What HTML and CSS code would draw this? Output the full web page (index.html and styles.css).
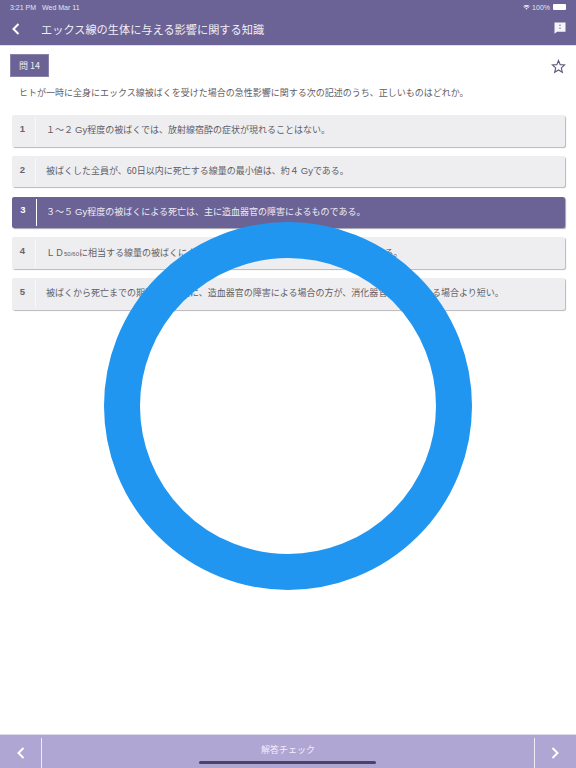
FILE: index.html
```html
<!DOCTYPE html>
<html lang="ja">
<head>
<meta charset="utf-8">
<title>問 14</title>
<link rel="stylesheet" href="styles.css">
</head>
<body>
<div class="app">
  <header class="header">
    <div class="status">
      <div class="status-left"><span>3:21 PM</span><span>Wed Mar 11</span></div>
      <div class="status-right">
        <svg class="wifi" viewBox="0 0 12 9"><path d="M6 8.6 3.900 6.400a3 3 0 0 1 4.200 0zM2.800 5.300 1.700 4.100a6 6 0 0 1 8.600 0L9.200 5.300a4.500 4.500 0 0 0-6.400 0zM.9 3.300 0 2.300a8.400 8.400 0 0 1 12 0l-.9 1a7.100 7.100 0 0 0-10.200 0z"/></svg>
        <span>100%</span>
        <span class="battery"></span>
      </div>
    </div>
    <div class="nav">
      <svg class="nav-back" viewBox="0 0 8 12"><path d="M6.500 1 1.500 6l5 5"/></svg>
      <h1 class="title">エックス線の生体に与える影響に関する知識</h1>
      <svg class="nav-note" viewBox="0 0 12 12"><path fill-rule="evenodd" d="M.5.5h11v9.200H3L.5 11.800zM5.500 2.500v1.600h1V2.500zM5.500 5.400V7h1V5.400z"/></svg>
    </div>
  </header>

  <main class="content">
    <div class="q-head">
      <span class="badge">問 14</span>
      <svg class="star" viewBox="0 0 16 16"><path d="M8 1.600 9.800 6l4.800.4-3.600 3.100 1.100 4.700L8 11.700l-4.100 2.500 1.100-4.700L1.400 6.400 6.200 6z"/></svg>
    </div>
    <p class="question">ヒトが一時に全身にエックス線被ばくを受けた場合の急性影響に関する次の記述のうち、正しいものはどれか。</p>
    <ol class="options">
      <li class="option"><span class="num">1</span><span class="text">１～２<span class="unit">Gy</span>程度の被ばくでは、放射線宿酔の症状が現れることはない。</span></li>
      <li class="option"><span class="num">2</span><span class="text">被ばくした全員が、60日以内に死亡する線量の最小値は、約４<span class="unit">Gy</span>である。</span></li>
      <li class="option selected"><span class="num">3</span><span class="text">３～５<span class="unit">Gy</span>程度の被ばくによる死亡は、主に造血器官の障害によるものである。</span></li>
      <li class="option"><span class="num">4</span><span class="text">ＬＤ<span class="sub">50/60</span>に相当する線量の被ばくによる死亡は、主に消化器官の障害によるものである。</span></li>
      <li class="option"><span class="num">5</span><span class="text">被ばくから死亡までの期間は、一般に、造血器官の障害による場合の方が、消化器官の障害による場合より短い。</span></li>
    </ol>
  </main>

  <footer class="footer">
    <div class="foot-btn foot-prev"><svg viewBox="0 0 8 12"><path d="M6.500 1 1.500 6l5 5"/></svg></div>
    <div class="foot-label">解答チェック</div>
    <div class="foot-btn foot-next"><svg viewBox="0 0 8 12"><path d="M1.500 1l5 5-5 5"/></svg></div>
    <span class="home-bar"></span>
  </footer>

  <svg class="spinner" viewBox="0 0 368 368"><circle cx="184" cy="184" r="166"/></svg>
</div>
</body>
</html>
```
FILE: styles.css
```css
* { box-sizing: border-box; margin: 0; padding: 0; }
html, body { width: 576px; height: 768px; overflow: hidden; background: #fff; }
body { font-family: "Noto Sans CJK JP", "Noto Sans", sans-serif; color: #55525f; }
.app { position: relative; width: 576px; height: 768px; display: flex; flex-direction: column; }

.header { height: 46px; background: #6b6295; border-bottom: 1px solid #e2e0ec; color: #fff; flex: none; }
.status { height: 14px; padding: 0 10px; display: flex; justify-content: space-between; align-items: center; font: 7px "Liberation Sans", sans-serif; color: #e8e6f0; }
.status-left { display: flex; gap: 6px; }
.status-right { display: flex; align-items: center; gap: 3px; }
.wifi { width: 7px; height: 5px; fill: #f0eff5; margin-right: -1px; }
.battery { width: 13px; height: 6px; background: #fff; border-radius: 1px; }
.nav { height: 31px; padding: 0 10px 0 12px; display: flex; align-items: center; }
.nav-back { width: 8px; height: 12px; fill: none; stroke: #fff; stroke-width: 2; margin-top: -1px; }
.title { flex: 1; margin-left: 21px; font-size: 11.200px; font-weight: 400; color: #f0eff5; margin-top: -1px; white-space: nowrap; }
.nav-note { width: 12px; height: 12px; fill: #f5f4f8; margin-top: -3px; }

.content { flex: 1; padding: 8px 11px 0 10px; }
.q-head { display: flex; justify-content: space-between; align-items: center; height: 22px; }
.badge { width: 39px; height: 23px; background: #6b6295; border: 1px solid #8a83ad; color: #eeedf4; font-size: 9px; display: flex; align-items: center; justify-content: center; }
.star { width: 15px; height: 15px; fill: none; stroke: #5f5a7a; stroke-width: 1.200; margin: 2px -1px 0 auto; }
.question { font-size: 9px; margin: 9.500px 0 0 9px; white-space: nowrap; line-height: 13px; color: #5f5d66; }

.options { list-style: none; margin: 16.500px 0 0 1.500px; display: flex; flex-direction: column; gap: 9.250px; }
.option { height: 31.500px; background: #eeeef1; border-radius: 2px; box-shadow: 1px 1px 1px #b9b8bd; display: flex; align-items: center; font-size: 9px; color: #5f5d66; }
.num { width: 24px; align-self: stretch; border-right: 1px solid #f8f8fa; margin: 2px 0; display: flex; align-items: center; justify-content: center; font: 700 9.500px "Liberation Sans", sans-serif; padding: 0 1px 5px 0; color: #66646d; }
.text { margin-left: 10.500px; white-space: nowrap; padding-bottom: 2px; }
.unit { font-family: "Liberation Sans", sans-serif; font-size: 9.500px; margin-left: 2px; }
.sub { font-family: "Liberation Sans", sans-serif; font-size: 6px; }
.selected { background: #6b6295; color: #eeedf4; box-shadow: 1px 1px 1px #a6a4ae; }
.selected .num { color: #fff; border-right-color: #fff; width: 25px; }
.selected .text { margin-left: 9.500px; }

.footer { position: relative; height: 34px; flex: none; background: #b0a6d4; border-top: 1px solid #dcd8ea; display: flex; color: #f1eff8; }
.foot-btn { width: 42px; display: flex; align-items: center; justify-content: center; }
.foot-btn svg { width: 8px; height: 12px; fill: none; stroke: #fff; stroke-width: 2; margin-top: -1px; }
.foot-prev { border-right: 1px solid #eeecf5; margin-top: 3px; }
.foot-next { border-left: 1px solid #eeecf5; margin-top: 3px; padding-right: 2px; }
.foot-label { flex: 1; font-size: 9px; text-align: center; line-height: 30px; }
.home-bar { position: absolute; left: 199px; bottom: 4px; width: 177px; height: 3px; border-radius: 2px; background: #4a4468; }

.spinner { position: absolute; left: 104px; top: 222px; width: 368px; height: 368px; fill: none; stroke: #2196f0; stroke-width: 36; }
```
